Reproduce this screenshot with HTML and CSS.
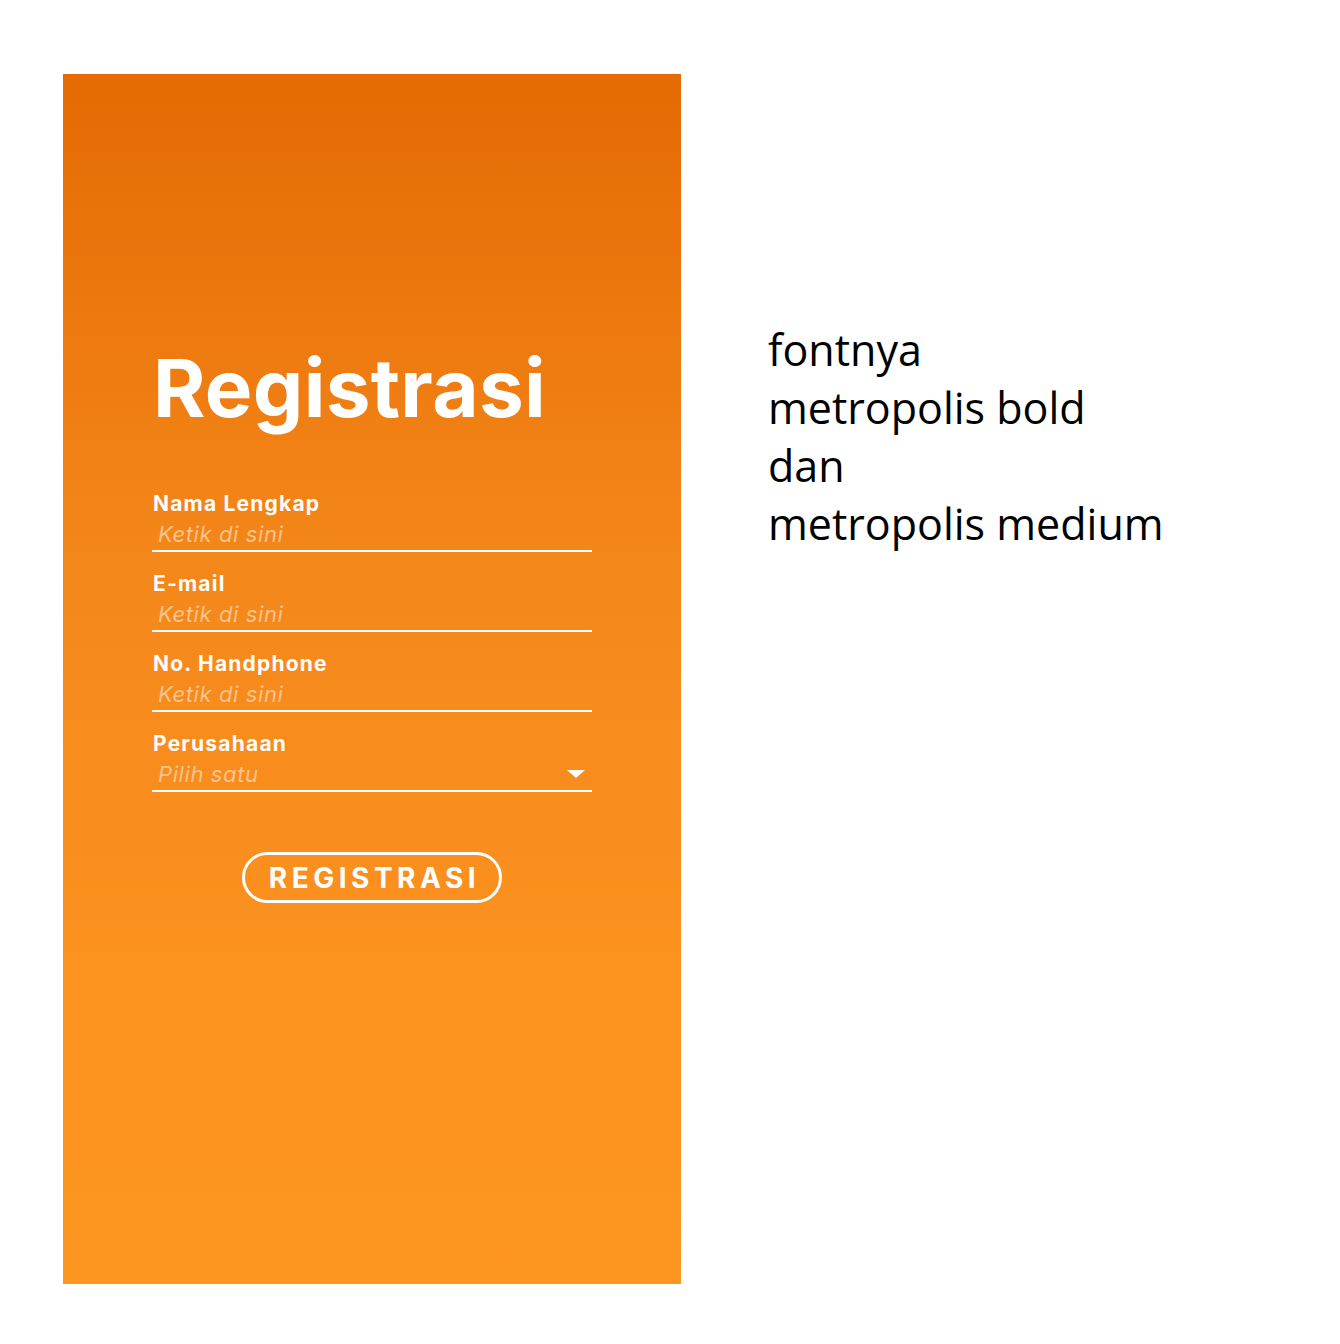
FILE: index.html
```html
<!DOCTYPE html>
<html lang="id">
<head>
<meta charset="utf-8">
<title>Registrasi</title>
<link rel="stylesheet" href="styles.css">
</head>
<body>
<div class="page">
  <section class="panel">
    <h1 class="title">Registrasi</h1>
    <form class="form">
      <div class="field">
        <label class="label">Nama Lengkap</label>
        <div class="input">Ketik di sini</div>
      </div>
      <div class="field">
        <label class="label">E-mail</label>
        <div class="input">Ketik di sini</div>
      </div>
      <div class="field">
        <label class="label">No. Handphone</label>
        <div class="input">Ketik di sini</div>
      </div>
      <div class="field">
        <label class="label">Perusahaan</label>
        <div class="input select">Pilih satu
          <svg class="caret" width="20" height="10" viewBox="0 0 20 10"><path d="M1 1 L19 1 L10 9 Z" fill="#fff"/></svg>
        </div>
      </div>
    </form>
    <div class="actions">
      <button class="btn" type="button">REGISTRASI</button>
    </div>
  </section>
  <div class="note">
    <p>fontnya</p>
    <p>metropolis bold</p>
    <p>dan</p>
    <p>metropolis medium</p>
  </div>
</div>
</body>
</html>
```
FILE: styles.css
```css
html, body {
  margin: 0;
  padding: 0;
  background: #ffffff;
}
.page {
  display: flex;
  align-items: flex-start;
  padding: 74px 0 0 63px;
}
.panel {
  width: 618px;
  height: 1210px;
  box-sizing: border-box;
  background: linear-gradient(to bottom, #e56a03 0%, #f4871a 40%, #fc9220 75%, #fd9521 100%);
  padding: 268px 89px 0 89px;
  font-family: Inter, "Liberation Sans", sans-serif;
  color: #fff;
}
.title {
  margin: 0;
  font-size: 80px;
  font-weight: 700;
  line-height: 92px;
  letter-spacing: 0.3px;
  padding-left: 1px;
}
.form {
  margin-top: 58px;
  display: flex;
  flex-direction: column;
  gap: 20px;
}
.field {
  display: flex;
  flex-direction: column;
}
.label {
  font-size: 21px;
  font-weight: 700;
  line-height: 24px;
  letter-spacing: 1.2px;
  padding-left: 1px;
}
.input {
  position: relative;
  font-size: 22px;
  font-style: italic;
  font-weight: 400;
  color: #fbc48d;
  line-height: 28px;
  letter-spacing: 0.6px;
  padding: 4px 0 2px 6px;
  border-bottom: 2px solid #fff;
}
.caret {
  position: absolute;
  right: 6px;
  top: 13px;
}
.actions {
  display: flex;
  justify-content: center;
  margin-top: 60px;
}
.btn {
  width: 260px;
  height: 51px;
  border: 3px solid #fff;
  border-radius: 26px;
  background: transparent;
  color: #fff;
  font-family: Inter, "Liberation Sans", sans-serif;
  font-size: 28px;
  font-weight: 700;
  letter-spacing: 4.5px;
  padding: 0 0 0 5px;
}
.note {
  margin-left: 87px;
  padding-top: 247px;
  font-family: "Open Sans", "Noto Sans", sans-serif;
  font-size: 43px;
  line-height: 58px;
  color: #000;
}
.note p {
  margin: 0;
}
```
